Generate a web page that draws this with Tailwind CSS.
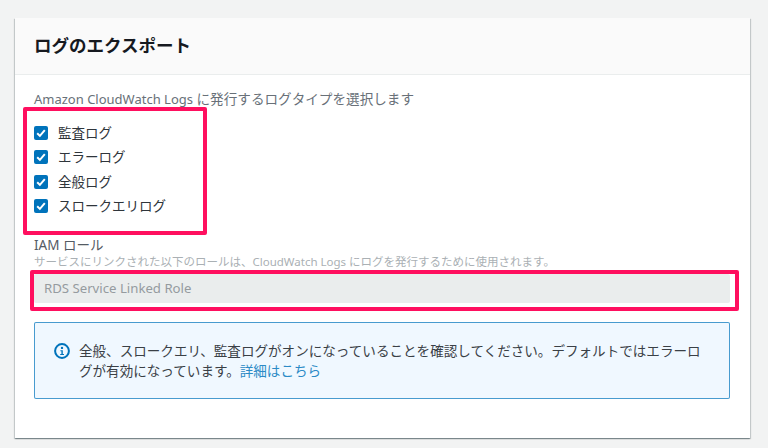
<!DOCTYPE html>
<html lang="ja">
<head>
    <meta charset="UTF-8">
    <title>ログのエクスポート</title>
    <script src="https://cdn.jsdelivr.net/npm/@tailwindcss/browser@4"></script>
</head>
<body class="w-[768px] h-[448px] overflow-hidden bg-[#f2f3f3] pt-[18px] pl-[15px] font-['Noto_Sans','Noto_Sans_CJK_JP',sans-serif] text-[#16191f]">

    <section class="w-[735px] h-[420px] bg-white shadow-[0_1px_1px_0_rgba(0,28,36,0.3),1px_1px_1px_0_rgba(0,28,36,0.15),-1px_1px_1px_0_rgba(0,28,36,0.15)]">
        <!-- Header -->
        <header class="h-[57px] bg-[#fafafa] border-b border-[#eaeded] pl-[19px] pb-[2px] flex items-center">
            <h2 class="text-[17.5px] font-bold leading-[20px]">ログのエクスポート</h2>
        </header>

        <div class="pl-[19px] pr-[20px] pt-[15px]">
            <p class="text-[13.6px] leading-[18px] text-[#687078]"><span class="text-[13px]">Amazon CloudWatch Logs</span> に発行するログタイプを選択します</p>

            <!-- Checkboxes -->
            <div class="relative mt-[-1px] h-[128px]">
                <ul class="pt-[14px] text-[13.5px] text-[#2f353b]">
                    <li class="flex items-center gap-[10px] h-[24.25px]">
                        <svg class="w-[14px] h-[14px]" viewBox="0 0 14 14"><rect width="14" height="14" rx="2" fill="#0073bb"/><path d="M3.2 7.2 L5.9 9.9 L10.8 4.2" fill="none" stroke="#fff" stroke-width="2"/></svg>
                        <span>監査ログ</span>
                    </li>
                    <li class="flex items-center gap-[10px] h-[24.25px]">
                        <svg class="w-[14px] h-[14px]" viewBox="0 0 14 14"><rect width="14" height="14" rx="2" fill="#0073bb"/><path d="M3.2 7.2 L5.9 9.9 L10.8 4.2" fill="none" stroke="#fff" stroke-width="2"/></svg>
                        <span>エラーログ</span>
                    </li>
                    <li class="flex items-center gap-[10px] h-[24.25px]">
                        <svg class="w-[14px] h-[14px]" viewBox="0 0 14 14"><rect width="14" height="14" rx="2" fill="#0073bb"/><path d="M3.2 7.2 L5.9 9.9 L10.8 4.2" fill="none" stroke="#fff" stroke-width="2"/></svg>
                        <span>全般ログ</span>
                    </li>
                    <li class="flex items-center gap-[10px] h-[24.25px]">
                        <svg class="w-[14px] h-[14px]" viewBox="0 0 14 14"><rect width="14" height="14" rx="2" fill="#0073bb"/><path d="M3.2 7.2 L5.9 9.9 L10.8 4.2" fill="none" stroke="#fff" stroke-width="2"/></svg>
                        <span>スロークエリログ</span>
                    </li>
                </ul>
                <div class="absolute left-[-11px] top-0 w-[184px] h-[128px] border-[4px] border-[#ff0f5f] rounded-[2px]"></div>
            </div>

            <!-- IAM role -->
            <div class="mt-[1px]">
                <label class="block text-[13.5px] leading-[18px] text-[#545b64]">IAM ロール</label>
                <p class="text-[11.5px] leading-[16px] text-[#aab0b4]">サービスにリンクされた以下のロールは、CloudWatch Logs にログを発行するために使用されます。</p>
            </div>
            <div class="relative mt-[4px] h-[29px]">
                <div class="h-full bg-[#eaeded] rounded-[2px] pl-[10px] flex items-center text-[13.2px] text-[#959b9f]">RDS Service Linked Role</div>
                <div class="absolute left-[-4px] top-[-4px] w-[709px] h-[41px] border-[4px] border-[#ff0f5f] rounded-[2px]"></div>
            </div>

            <!-- Info alert -->
            <div class="mt-[19px] h-[77px] bg-[#f0f8ff] border border-[#0073bb]/70 rounded-[2px] pl-[19px] pr-[22px] flex items-center gap-[9px]">
                <svg class="w-[16px] h-[16px] shrink-0 self-start mt-[20px]" viewBox="0 0 16 16"><circle cx="8" cy="8" r="6.9" fill="none" stroke="#0073bb" stroke-width="2"/><circle cx="8" cy="4.9" r="1.2" fill="#0073bb"/><path d="M6.4 7.2H8.8V11H10V12H6.2V11H7.4V8.2H6.4Z" fill="#0073bb"/></svg>
                <p class="text-[13.57px] leading-[20px] text-[#3a4046]">全般、スロークエリ、監査ログがオンになっていることを確認してください。デフォルトではエラーログが有効になっています。<a class="text-[#2b8ac6]">詳細はこちら</a></p>
            </div>
        </div>
    </section>

</body>
</html>
